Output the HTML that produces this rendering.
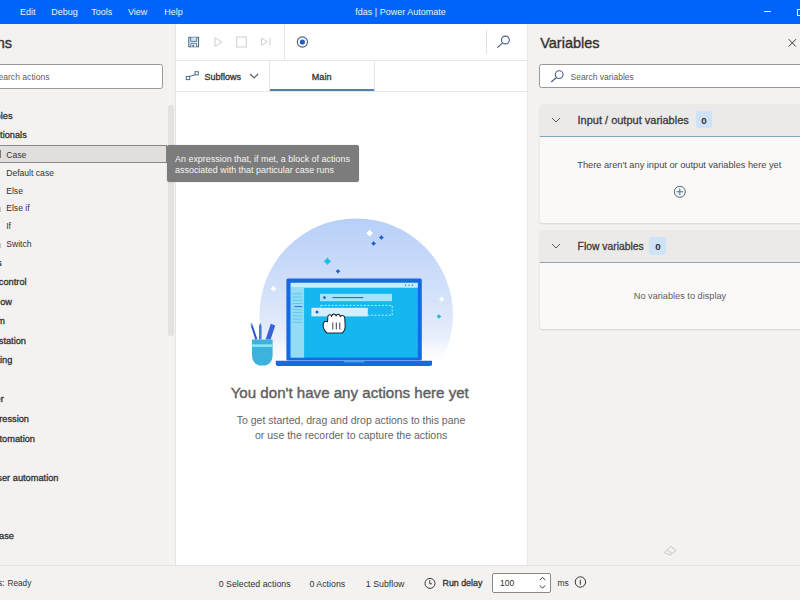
<!DOCTYPE html><html><head><meta charset="utf-8"><title>fdas | Power Automate</title><style>*{margin:0;padding:0;box-sizing:border-box}
html,body{width:800px;height:600px;overflow:hidden;background:#f3f2f1;font-family:"Liberation Sans",sans-serif;color:#323130}
body{position:relative}
.a{position:absolute;white-space:nowrap}
.b{position:absolute}
svg{position:absolute;overflow:visible}
</style></head><body>
<div class="b" style="left:0;top:0;width:800px;height:24px;background:#0064fa"></div>
<div class="b" style="left:176px;top:24px;width:351px;height:541px;background:#fff"></div>
<div class="b" style="left:175px;top:24px;width:1px;height:541px;background:#e6e5e4"></div>
<div class="b" style="left:527px;top:24px;width:1px;height:541px;background:#e9e8e7"></div>
<div class="b" style="left:0;top:565px;width:800px;height:1px;background:#e5e3e1"></div>
<div class="a" style="left:20.00px;top:7.48px;font-size:9.00px;line-height:10.80px;color:#e9f3ff;">Edit</div>
<div class="a" style="left:51.30px;top:7.48px;font-size:9.00px;line-height:10.80px;color:#e9f3ff;">Debug</div>
<div class="a" style="left:91.30px;top:7.48px;font-size:9.00px;line-height:10.80px;color:#e9f3ff;">Tools</div>
<div class="a" style="left:128.00px;top:7.48px;font-size:9.00px;line-height:10.80px;color:#e9f3ff;">View</div>
<div class="a" style="left:164.30px;top:7.48px;font-size:9.00px;line-height:10.80px;color:#e9f3ff;">Help</div>
<div class="a" style="left:355.30px;top:7.48px;font-size:9.00px;line-height:10.80px;color:#e9f3ff;">fdas | Power Automate</div>
<div class="b" style="left:764px;top:11px;width:7px;height:1px;background:#e9f3ff"></div>
<div class="b" style="left:797px;top:8.5px;width:8px;height:7px;border:1px solid #e9f3ff"></div>
<div class="a" style="left:-35.55px;top:35.28px;font-size:14.50px;line-height:17.40px;color:#323130;-webkit-text-stroke:0.35px #323130;">Actions</div>
<div class="b" style="left:-20px;top:64px;width:183px;height:24.5px;background:#fff;border:1px solid #9b9997;border-radius:2.5px"></div>
<div class="a" style="left:-7.29px;top:71.86px;font-size:8.60px;line-height:10.32px;color:#605e5c;">Search actions</div>
<div class="a" style="left:-25.38px;top:111.14px;font-size:9.25px;line-height:11.10px;color:#323130;-webkit-text-stroke:0.3px #323130;">Variables</div>
<div class="a" style="left:-24.11px;top:130.34px;font-size:9.25px;line-height:11.10px;color:#323130;-webkit-text-stroke:0.3px #323130;">Conditionals</div>
<div class="b" style="left:-10px;top:145px;width:177px;height:17.5px;background:#e1dfdd;border:1px solid #8a8886"></div>
<div class="a" style="left:6.20px;top:149.66px;font-size:8.60px;line-height:10.32px;color:#323130;">Case</div>
<div class="a" style="left:6.20px;top:167.61px;font-size:8.60px;line-height:10.32px;color:#323130;">Default case</div>
<div class="a" style="left:6.20px;top:185.61px;font-size:8.60px;line-height:10.32px;color:#323130;">Else</div>
<div class="a" style="left:6.20px;top:203.36px;font-size:8.60px;line-height:10.32px;color:#323130;">Else if</div>
<div class="a" style="left:6.20px;top:221.26px;font-size:8.60px;line-height:10.32px;color:#323130;">If</div>
<div class="a" style="left:6.20px;top:239.16px;font-size:8.60px;line-height:10.32px;color:#323130;">Switch</div>
<div class="b" style="left:0;top:150px;width:1.2px;height:8px;background:#7a7978"></div>
<div class="b" style="left:0;top:207px;width:1px;height:5px;background:#c8c6c4"></div>
<div class="b" style="left:0;top:243px;width:1px;height:5px;background:#c8c6c4"></div>
<div class="a" style="left:-23.60px;top:257.84px;font-size:9.25px;line-height:11.10px;color:#323130;-webkit-text-stroke:0.3px #323130;">Loops</div>
<div class="a" style="left:-23.26px;top:277.24px;font-size:9.25px;line-height:11.10px;color:#323130;-webkit-text-stroke:0.3px #323130;">Flow control</div>
<div class="a" style="left:-23.99px;top:296.84px;font-size:9.25px;line-height:11.10px;color:#323130;-webkit-text-stroke:0.3px #323130;">Run flow</div>
<div class="a" style="left:-25.84px;top:316.24px;font-size:9.25px;line-height:11.10px;color:#323130;-webkit-text-stroke:0.3px #323130;">System</div>
<div class="a" style="left:-22.67px;top:335.84px;font-size:9.25px;line-height:11.10px;color:#323130;-webkit-text-stroke:0.3px #323130;">Workstation</div>
<div class="a" style="left:-23.59px;top:355.04px;font-size:9.25px;line-height:11.10px;color:#323130;-webkit-text-stroke:0.3px #323130;">Scripting</div>
<div class="a" style="left:-22.42px;top:394.34px;font-size:9.25px;line-height:11.10px;color:#323130;-webkit-text-stroke:0.3px #323130;">Folder</div>
<div class="a" style="left:-25.49px;top:413.84px;font-size:9.25px;line-height:11.10px;color:#323130;-webkit-text-stroke:0.3px #323130;">Compression</div>
<div class="a" style="left:-22.59px;top:433.64px;font-size:9.25px;line-height:11.10px;color:#323130;-webkit-text-stroke:0.3px #323130;">UI automation</div>
<div class="a" style="left:-23.76px;top:472.54px;font-size:9.25px;line-height:11.10px;color:#323130;-webkit-text-stroke:0.3px #323130;">Browser automation</div>
<div class="a" style="left:-25.60px;top:530.84px;font-size:9.25px;line-height:11.10px;color:#323130;-webkit-text-stroke:0.3px #323130;">Database</div>
<div class="b" style="left:168px;top:105px;width:5.7px;height:231px;background:#e3e2e1;border-radius:2px"></div>
<div class="b" style="left:166.6px;top:144.7px;width:192px;height:37px;background:#7c7c7c;border-radius:2px;box-shadow:0 0 2px rgba(0,0,0,.15)"></div>
<div class="a" style="left:175.00px;top:153.53px;font-size:8.95px;line-height:10.74px;color:#f4f4f4;">An expression that, if met, a block of actions</div>
<div class="a" style="left:175.00px;top:165.13px;font-size:8.95px;line-height:10.74px;color:#f4f4f4;">associated with that particular case runs</div>
<div class="b" style="left:176px;top:60px;width:351px;height:1px;background:#e6e5e4"></div>
<div class="b" style="left:284px;top:24px;width:1px;height:36px;background:#e6e5e4"></div>
<div class="b" style="left:486px;top:30px;width:1px;height:23.5px;background:#e1e0df"></div>
<div class="b" style="left:176px;top:91px;width:351px;height:1px;background:#e8e7e6"></div>
<div class="b" style="left:269px;top:61px;width:1px;height:30px;background:#e8e7e6"></div>
<div class="b" style="left:374px;top:61px;width:1px;height:30px;background:#e8e7e6"></div>
<div class="b" style="left:269.5px;top:89px;width:104.5px;height:2px;background:#4f7fab"></div>
<div class="a" style="left:204.40px;top:72.08px;font-size:9.00px;line-height:10.80px;color:#323130;-webkit-text-stroke:0.3px #323130;">Subflows</div>
<div class="a" style="left:311.75px;top:71.79px;font-size:9.10px;line-height:10.92px;color:#323130;-webkit-text-stroke:0.3px #323130;">Main</div>
<div class="a" style="left:540.20px;top:35.18px;font-size:14.50px;line-height:17.40px;color:#323130;-webkit-text-stroke:0.35px #323130;">Variables</div>
<div class="b" style="left:539.3px;top:64.3px;width:280px;height:23.7px;background:#fff;border:1px solid #9b9997;border-radius:2.5px"></div>
<div class="a" style="left:570.50px;top:72.15px;font-size:8.50px;line-height:10.20px;color:#605e5c;">Search variables</div>
<div class="b" style="left:539.5px;top:103.5px;width:280px;height:119px;background:#faf9f8;border-radius:3px;box-shadow:0 1px 2px rgba(0,0,0,.13)"></div>
<div class="b" style="left:539.5px;top:103.5px;width:280px;height:33.5px;background:#ebeae9;border-radius:3px 3px 0 0;border-bottom:1px solid #86a6bd"></div>
<div class="a" style="left:577.50px;top:114.19px;font-size:11.00px;line-height:13.20px;color:#3b3a39;-webkit-text-stroke:0.3px #3b3a39;">Input / output variables</div>
<div class="b" style="left:695.8px;top:110.8px;width:16.4px;height:17.5px;background:#cfe3f8;border-radius:2px"></div>
<div class="a" style="left:701.37px;top:114.82px;font-size:9.80px;line-height:11.76px;font-weight:bold;color:#323130;">0</div>
<div class="a" style="left:577.30px;top:159.55px;font-size:9.24px;line-height:11.09px;color:#484644;">There aren&#39;t any input or output variables here yet</div>
<div class="b" style="left:539.5px;top:230px;width:280px;height:99.3px;background:#faf9f8;border-radius:3px;box-shadow:0 1px 2px rgba(0,0,0,.13)"></div>
<div class="b" style="left:539.5px;top:230px;width:280px;height:33px;background:#ebeae9;border-radius:3px 3px 0 0;border-bottom:1px solid #86a6bd"></div>
<div class="a" style="left:577.60px;top:240.50px;font-size:10.35px;line-height:12.42px;color:#3b3a39;-webkit-text-stroke:0.3px #3b3a39;">Flow variables</div>
<div class="b" style="left:649.3px;top:237px;width:17px;height:18.4px;background:#cfe3f8;border-radius:2px"></div>
<div class="a" style="left:655.37px;top:240.82px;font-size:9.80px;line-height:11.76px;font-weight:bold;color:#323130;">0</div>
<div class="a" style="left:633.75px;top:291.29px;font-size:9.20px;line-height:11.04px;color:#605e5c;">No variables to display</div>
<div class="a" style="left:230.70px;top:383.71px;font-size:15.10px;line-height:18.12px;color:#606060;-webkit-text-stroke:0.4px #606060;">You don&#39;t have any actions here yet</div>
<div class="a" style="left:236.70px;top:414.33px;font-size:10.53px;line-height:12.64px;color:#666666;">To get started, drag and drop actions to this pane</div>
<div class="a" style="left:255.00px;top:429.23px;font-size:10.53px;line-height:12.64px;color:#666666;">or use the recorder to capture the actions</div>
<div class="a" style="left:-23.10px;top:578.08px;font-size:8.90px;line-height:10.68px;color:#323130;">Status:</div>
<div class="a" style="left:7.60px;top:578.74px;font-size:8.20px;line-height:9.84px;color:#323130;transform:scaleY(1.08);transform-origin:0 80%;">Ready</div>
<div class="a" style="left:218.70px;top:578.77px;font-size:8.80px;line-height:10.56px;color:#323130;">0 Selected actions</div>
<div class="a" style="left:309.50px;top:578.77px;font-size:8.80px;line-height:10.56px;color:#323130;">0 Actions</div>
<div class="a" style="left:365.80px;top:578.77px;font-size:8.80px;line-height:10.56px;color:#323130;">1 Subflow</div>
<div class="a" style="left:442.50px;top:578.32px;font-size:8.85px;line-height:10.62px;color:#323130;-webkit-text-stroke:0.3px #323130;">Run delay</div>
<div class="b" style="left:491.75px;top:573px;width:59.5px;height:19.5px;background:#fff;border:1px solid #8a8886;border-radius:2px"></div>
<div class="a" style="left:500.00px;top:578.45px;font-size:8.50px;line-height:10.20px;color:#323130;">100</div>
<div class="a" style="left:557.50px;top:578.45px;font-size:8.50px;line-height:10.20px;color:#323130;">ms</div>
<svg width="800" height="600" style="left:0;top:0" viewBox="0 0 800 600">
<defs>
<linearGradient id="cg" x1="0" y1="0" x2="0" y2="1">
<stop offset="0" stop-color="#b7cff8"/><stop offset="0.45" stop-color="#d8e4fa"/><stop offset="0.62" stop-color="#e9effc"/><stop offset="0.78" stop-color="#ffffff" stop-opacity="0"/>
</linearGradient>
</defs>
<!-- toolbar icons -->
<g fill="none" stroke-linejoin="miter">
<rect x="188.8" y="37.3" width="9.8" height="9.5" fill="#dff0fb" stroke="#46647e" stroke-width="1"/>
<path d="M190.7 37.5 V41.4 H196.7 V37.5" fill="#c9e6f8" stroke="#46647e" stroke-width="0.8"/>
<path d="M190.9 46.7 V43.4 H196.5 V46.7" fill="#f4fbff" stroke="#46647e" stroke-width="0.8"/>
<rect x="192.3" y="44.8" width="1.8" height="1.9" fill="#46647e"/>
<path d="M215 37.5 L221.8 42 L215 46.5 Z" stroke="#cfcfcf" stroke-width="1"/>
<rect x="236.7" y="37" width="9.6" height="10" stroke="#cfcfcf" stroke-width="1"/>
<path d="M261.5 38 L267.2 41.7 L261.5 45.4 Z M270 37.8 V45.6" stroke="#cfcfcf" stroke-width="1"/>
<circle cx="302.4" cy="42" r="5.1" stroke="#4b5c72" stroke-width="1.1"/>
<circle cx="302.4" cy="42" r="2.6" fill="#1f5fc4"/>
<circle cx="505.4" cy="40" r="3.9" stroke="#4a5f80" stroke-width="1.1"/>
<path d="M502.6 42.9 L497.4 47.6" stroke="#4a5f80" stroke-width="1.2"/>
<!-- subflows icon -->
<rect x="186.3" y="76.4" width="3.4" height="3.2" stroke="#4a6f8f" stroke-width="1"/>
<rect x="195" y="71.7" width="3.3" height="3.2" stroke="#4a6f8f" stroke-width="1"/>
<path d="M189.6 76.5 L195.1 74.8" stroke="#4a6f8f" stroke-width="1"/>
<path d="M250.2 74 L254.1 78 L258 74" stroke="#605e5c" stroke-width="1.1"/>
<!-- right panel -->
<path d="M788.6 39.2 L796 46.6 M796 39.2 L788.6 46.6" stroke="#3b3a39" stroke-width="1"/>
<circle cx="559.2" cy="74.6" r="3.9" stroke="#4a5f80" stroke-width="1.1"/>
<path d="M556.4 77.5 L551.3 82" stroke="#4a5f80" stroke-width="1.2"/>
<path d="M552 118 L556 122 L560 118" stroke="#5a5a5a" stroke-width="1"/>
<path d="M552 244 L556 248 L560 244" stroke="#5a5a5a" stroke-width="1"/>
<circle cx="679.8" cy="191.8" r="5.5" stroke="#4f6478" stroke-width="1"/>
<path d="M676.4 191.8 H683.2 M679.8 188.6 V195" stroke="#3f78b0" stroke-width="1.1"/>
<path d="M670.8 546.4 L675.8 550.4 L670.6 555 L664.4 552.8 Z M667.4 550.2 L672 553.6" stroke="#c2c1c0" stroke-width="0.9"/>
<!-- status -->
<circle cx="430" cy="583.4" r="5" stroke="#3b3a39" stroke-width="1"/>
<path d="M429.8 580.2 V583.8 H432" stroke="#3b3a39" stroke-width="1"/>
<path d="M539.8 580 L542.5 577.4 L545.2 580 M539.8 585.4 L542.5 588.2 L545.2 585.4" stroke="#3b3a39" stroke-width="1"/>
<circle cx="580.4" cy="582" r="5.2" stroke="#3b3a39" stroke-width="1"/>
<path d="M580.3 579.8 V584.8" stroke="#3b3a39" stroke-width="1"/>
</g>
<!-- illustration -->
<circle cx="356.2" cy="315.2" r="96.8" fill="url(#cg)"/>
<!-- sparkles -->
<path d="M369.60 229.60 Q370.97 231.83 373.20 233.20 Q370.97 234.57 369.60 236.80 Q368.23 234.57 366.00 233.20 Q368.23 231.83 369.60 229.60 Z" fill="#ffffff"/>
<path d="M381.40 235.00 Q382.35 236.55 383.90 237.50 Q382.35 238.45 381.40 240.00 Q380.45 238.45 378.90 237.50 Q380.45 236.55 381.40 235.00 Z" fill="#1f5fd0"/>
<path d="M373.60 241.00 Q374.55 242.55 376.10 243.50 Q374.55 244.45 373.60 246.00 Q372.65 244.45 371.10 243.50 Q372.65 242.55 373.60 241.00 Z" fill="#1f5fd0"/>
<path d="M327.40 257.60 Q328.81 259.89 331.10 261.30 Q328.81 262.71 327.40 265.00 Q325.99 262.71 323.70 261.30 Q325.99 259.89 327.40 257.60 Z" fill="#1fbde6"/>
<path d="M338.00 268.90 Q338.91 270.39 340.40 271.30 Q338.91 272.21 338.00 273.70 Q337.09 272.21 335.60 271.30 Q337.09 270.39 338.00 268.90 Z" fill="#1f5fd0"/>
<path d="M273.40 285.80 Q274.50 287.60 276.30 288.70 Q274.50 289.80 273.40 291.60 Q272.30 289.80 270.50 288.70 Q272.30 287.60 273.40 285.80 Z" fill="#ffffff"/>
<path d="M441.70 296.20 Q442.80 298.00 444.60 299.10 Q442.80 300.20 441.70 302.00 Q440.60 300.20 438.80 299.10 Q440.60 298.00 441.70 296.20 Z" fill="#ffffff"/>
<path d="M438.90 314.00 Q439.85 315.55 441.40 316.50 Q439.85 317.45 438.90 319.00 Q437.95 317.45 436.40 316.50 Q437.95 315.55 438.90 314.00 Z" fill="#1fbde6"/>
<!-- laptop -->
<rect x="286.4" y="278.6" width="135.4" height="82" rx="1.5" fill="#1668e3"/>
<rect x="290.6" y="282.8" width="127.2" height="74.8" fill="#14b7ef"/>
<rect x="290.6" y="282.8" width="127.2" height="4.9" fill="#c6eefb"/>
<circle cx="405.5" cy="285.2" r="0.7" fill="#3a6fb0"/><circle cx="409" cy="285.2" r="0.7" fill="#3a6fb0"/><circle cx="412.5" cy="285.2" r="0.7" fill="#3a6fb0"/>
<rect x="290.6" y="287.7" width="13.5" height="69.9" fill="#94dcf6"/>
<g stroke="#4fc3ee" stroke-width="0.8">
<path d="M292.5 293.8 H302.5 M292.5 297.1 H302.5 M292.5 300.3 H302.5 M292.5 303.5 H302.5 M292.5 309.7 H302.5 M292.5 312.6 H302.5 M292.5 315.9 H302.5 M292.5 319.1 H302.5 M292.5 322.3 H302.5"/>
</g>
<path d="M294.4 306.6 H302.2" stroke="#1f5fc4" stroke-width="0.9"/>
<rect x="320" y="293.8" width="72" height="7.4" fill="#a6e3f8"/>
<circle cx="324.4" cy="297.6" r="1.4" fill="#1f5fc4"/>
<path d="M332.5 297.6 H363.4" stroke="#1f5fc4" stroke-width="1"/>
<rect x="320.6" y="305.4" width="71.6" height="9.8" fill="none" stroke="#c4effd" stroke-width="0.9" stroke-dasharray="2.2 1.4"/>
<rect x="311.4" y="307.8" width="56.4" height="8.6" fill="#d3effa"/>
<circle cx="317" cy="312.1" r="1.5" fill="#1f5fc4"/>
<!-- laptop base -->
<path d="M275.8 360.8 H432 V364.2 Q432 366 430 366 H278 Q275.8 366 275.8 364.2 Z" fill="#1668e3"/>
<rect x="343.8" y="360.8" width="20.6" height="1.6" fill="#5a9cf0"/>
<!-- hand -->
<path d="M327 333 C324.5 331 322.8 328 323.2 324.5 C323.5 321.5 325.5 320.5 327.5 321.8 L327.8 317 C327.8 314.3 331 314 331.6 316.5 C332 313.4 335.4 313.4 336 316 C336.7 313.6 340 313.8 340.4 316.6 C341.2 314.8 344.6 315.2 344.8 318 L345.2 326 C345.2 330 343.5 332 342 333 Z" fill="#ffffff" stroke="#1e2a3a" stroke-width="1.1" stroke-linejoin="round"/>
<path d="M332.8 322.5 V329.5 M336.3 322.5 V329.5 M339.8 322.5 V329.5" stroke="#1e2a3a" stroke-width="0.9"/>
<!-- pen cup -->
<path d="M251.4 324.2 L256.4 339.6" stroke="#2a58cc" stroke-width="2"/>
<path d="M251 323 L252.4 325.6" stroke="#9ab8f0" stroke-width="1.6"/>
<path d="M259 339.6 V326 L260.3 322.8 L261.6 326 V339.6 Z" fill="#4a78d8"/>
<path d="M270.8 323.8 L275.2 325.6 L270.6 339.6 L265.6 339.6 Z" fill="#3a62d8"/>
<path d="M252 339.4 H272.6 V354.5 Q272.6 365.6 262.3 365.6 Q252 365.6 252 354.5 Z" fill="#3cb3dc"/>
<rect x="252" y="344.3" width="20.6" height="2.6" fill="#8fe6fb"/>
</svg>
</body></html>
